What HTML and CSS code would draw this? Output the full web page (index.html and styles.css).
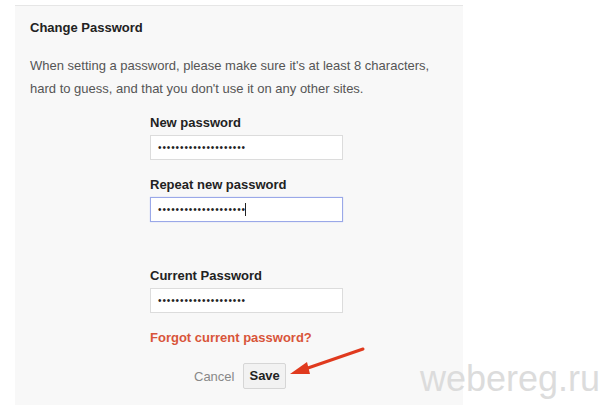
FILE: index.html
```html
<!DOCTYPE html>
<html>
<head>
<meta charset="utf-8">
<link rel="stylesheet" href="styles.css">
</head>
<body>
<div class="panel">
  <h1 class="title">Change Password</h1>
  <p class="intro">When setting a password, please make sure it's at least 8 characters, hard to guess, and that you don't use it on any other sites.</p>
  <div class="form">
    <div class="group">
      <label class="label">New password</label>
      <div class="field"><span class="dots">••••••••••••••••••••</span></div>
    </div>
    <div class="group">
      <label class="label">Repeat new password</label>
      <div class="field focus"><span class="dots">••••••••••••••••••••</span><span class="caret"></span></div>
    </div>
    <div class="group current">
      <label class="label">Current Password</label>
      <div class="field"><span class="dots">••••••••••••••••••••</span></div>
    </div>
    <a class="forgot">Forgot current password?</a>
    <div class="actions">
      <span class="cancel">Cancel</span>
      <span class="save">Save</span>
    </div>
  </div>
</div>
<svg class="arrow" width="90" height="40" viewBox="0 0 90 40">
  <path d="M80 5 L22 25" stroke="#e03a1e" stroke-width="3" stroke-linecap="round" fill="none"/>
  <path d="M7 30 L24 18 L27 30 Z" fill="#e03a1e"/>
</svg>
<div class="watermark">webereg.ru</div>
</body>
</html>
```
FILE: styles.css
```css
html, body {
  margin: 0;
  padding: 0;
  background: #ffffff;
}
body {
  width: 600px;
  height: 405px;
  overflow: hidden;
  position: relative;
  font-family: "Liberation Sans", Arial, sans-serif;
}
.panel {
  margin: 5px 0 0 15px;
  width: 448px;
  height: 400px;
  background: #f8f8f8;
  border-top: 1px solid #e6e6e6;
  box-sizing: border-box;
  padding: 14px 0 0 15px;
}
.title {
  margin: 0;
  font-size: 13px;
  font-weight: bold;
  color: #222;
  line-height: 16px;
}
.intro {
  margin: 18px 0 0 0;
  font-size: 13px;
  color: #555;
  line-height: 23px;
  width: 420px;
}
.form {
  margin: 15px 0 0 120px;
  display: flex;
  flex-direction: column;
}
.group {
  display: flex;
  flex-direction: column;
  margin-bottom: 17px;
}
.group.current {
  margin-top: 29px;
}
.label {
  font-size: 13px;
  font-weight: bold;
  color: #222;
  line-height: 16px;
  margin-bottom: 4px;
}
.field {
  width: 193px;
  height: 25px;
  box-sizing: border-box;
  border: 1px solid #dcdcdc;
  background: #fff;
  display: flex;
  align-items: center;
  padding-left: 7px;
}
.field.focus {
  border-color: #9aa8e8;
  box-shadow: 0 0 1px #b8c2f0;
}
.dots {
  font-size: 10px;
  letter-spacing: 0.9px;
  color: #222;
  line-height: 10px;
}
.caret {
  width: 1px;
  height: 13px;
  background: #222;
  margin-left: -1px;
}
.forgot {
  font-size: 13px;
  font-weight: bold;
  color: #d8553a;
  line-height: 16px;
}
.actions {
  display: flex;
  align-items: center;
  margin: 17px 0 0 44px;
  gap: 9px;
}
.cancel {
  font-size: 13px;
  color: #888;
}
.save {
  font-size: 13px;
  font-weight: bold;
  color: #222;
  border: 1px solid #d6d6d6;
  background: #f2f2f2;
  padding: 5px 5px 6px;
  line-height: 13px;
  border-radius: 2px;
}
.arrow {
  position: absolute;
  left: 283px;
  top: 344px;
}
.watermark {
  position: absolute;
  left: 420px;
  top: 359px;
  font-family: "Liberation Sans", Arial, sans-serif;
  font-size: 36px;
  line-height: 40px;
  color: #dcdcdc;
}
```
